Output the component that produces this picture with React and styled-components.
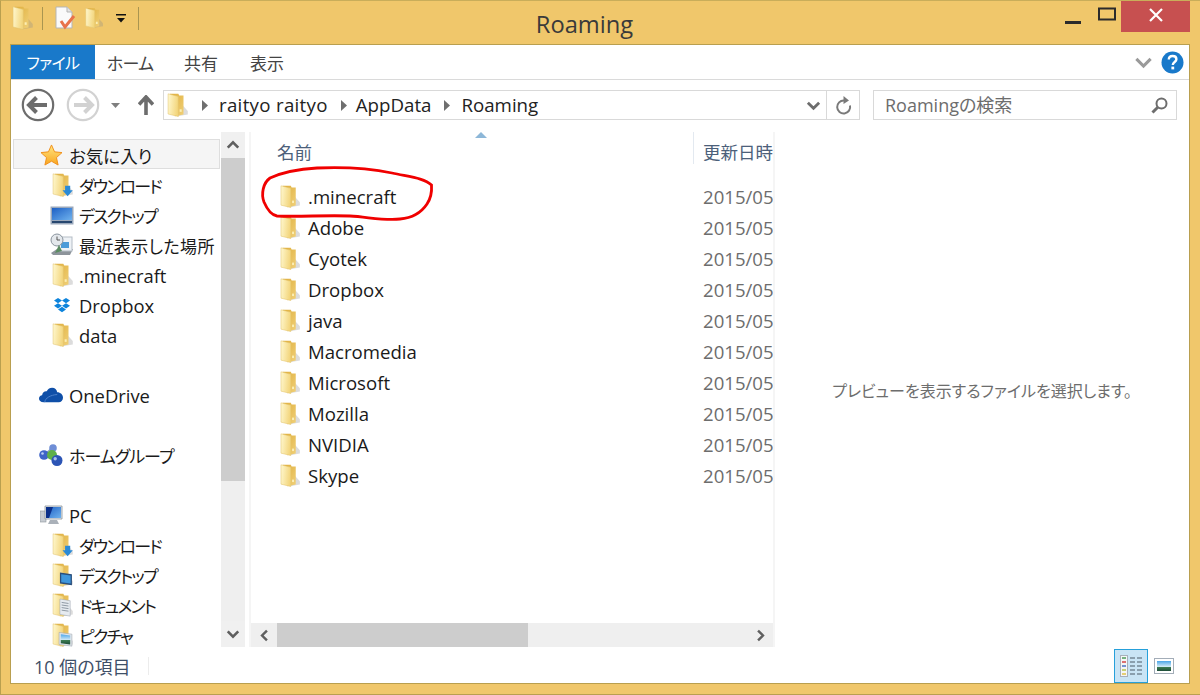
import React from 'react';
import styled, { createGlobalStyle } from 'styled-components';

const GlobalStyle = createGlobalStyle`
  html, body {
    margin: 0;
    padding: 0;
    overflow: hidden;
    background: #f0c76b;
  }
  * {
    box-sizing: border-box;
  }
`;

const FONT = `"Open Sans", "Noto Sans CJK JP", sans-serif`;

const Window = styled.div`
  width: 1200px;
  height: 695px;
  display: flex;
  flex-direction: column;
  background: #f0c76b;
  border: 1px solid #b99f4f;
  border-top-color: #c9ad5a;
  border-right: none;
  font-family: ${FONT};
  font-feature-settings: "palt";
  color: #1a1a1a;
`;

const TitleBar = styled.div`
  height: 43px;
  flex: none;
  display: grid;
  grid-template-columns: 1fr auto 1fr;
`;

const QuickAccess = styled.div`
  display: flex;
  align-items: center;
  height: 34px;
  padding-left: 11px;
`;

const Gap = styled.span`
  width: ${p => p.$w}px;
  flex: none;
`;

const QuickSep = styled.div`
  width: 1px;
  height: 23px;
  background: #a99550;
  margin: 0 ${p => p.$right || 12}px 0 ${p => p.$left || 8}px;
`;

const Title = styled.div`
  font-size: 23.7px;
  line-height: 46px;
  color: #3a3a3a;
  padding-right: 32px;
`;

const WindowButtons = styled.div`
  display: flex;
  justify-content: flex-end;
  padding-right: 10px;
`;

const WinButton = styled.div`
  width: ${p => p.$w}px;
  height: 31px;
  display: flex;
  align-items: center;
  justify-content: center;
  background: ${p => (p.$close ? '#c75050' : 'transparent')};

  svg {
    margin-top: ${p => p.$shift || 0}px;
  }
`;

const Panel = styled.div`
  flex: 1;
  margin: 0 10px 10px 9px;
  display: flex;
  flex-direction: column;
  background: #fff;
  border: 1px solid #b99f4f;
  min-height: 0;
`;

const Ribbon = styled.div`
  height: 35px;
  flex: none;
  display: flex;
  align-items: center;
  border-bottom: 1px solid #dadada;
`;

const FileTab = styled.div`
  width: 84px;
  height: 34px;
  background: #1979ca;
  color: #fff;
  font-size: 16px;
  letter-spacing: -0.6px;
  display: flex;
  align-items: center;
  justify-content: center;
`;

const Tab = styled.div`
  width: ${p => p.$w}px;
  text-align: center;
  font-size: 17px;
  color: #444;
  letter-spacing: ${p => p.$track || 0}px;
`;

const RibbonRight = styled.div`
  margin-left: auto;
  display: flex;
  align-items: center;
  gap: 8px;
  padding-right: 5px;
`;

const Toolbar = styled.div`
  height: 50px;
  flex: none;
  display: flex;
  align-items: flex-start;
  padding: 10px 12px 0 10px;
`;

const NavButtons = styled.div`
  width: 142px;
  height: 30px;
  flex: none;
  display: flex;
  align-items: center;
`;

const AddressBar = styled.div`
  width: 697px;
  height: 30px;
  flex: none;
  border: 1px solid #d9d9d9;
  display: flex;
  align-items: center;
  padding-left: 3px;
  font-size: 18.7px;
  color: #222;
`;

const Crumb = styled.span`
  margin: -2px 13px 0 ${p => p.$left || 9}px;
  letter-spacing: ${p => p.$track || 0}px;
  white-space: nowrap;
`;

const AddressTools = styled.div`
  margin-left: auto;
  height: 100%;
  display: flex;
  align-items: center;
`;

const ToolDivider = styled.div`
  width: 1px;
  height: 100%;
  background: #d9d9d9;
  margin: 0 8px 0 5px;
`;

const SearchBox = styled.div`
  flex: 1;
  height: 30px;
  margin-left: 13px;
  border: 1px solid #d9d9d9;
  display: flex;
  align-items: center;
  justify-content: space-between;
  padding: 0 8px 0 11px;
  font-size: 18px;
  color: #6d6d6d;

  span {
    margin-top: -2px;
  }
`;

const Content = styled.div`
  flex: 1;
  min-height: 0;
  display: flex;
`;

const NavPane = styled.div`
  width: 210px;
  flex: none;
  padding: 9px 0 0 2px;
  overflow: hidden;
`;

const NavRow = styled.div`
  height: 30px;
  width: 207px;
  margin-top: ${p => p.$gap || 0}px;
  padding: 2px 0 0 ${p => (p.$child ? 36 : 25)}px;
  display: flex;
  align-items: center;
  gap: ${p => (p.$child ? 5 : 6)}px;
  font-size: ${p => p.$size || 18.4}px;
  letter-spacing: ${p => p.$track || 0}px;
  white-space: nowrap;
  background: ${p => (p.$active ? '#f5f5f5' : 'transparent')};
  border: 1px solid ${p => (p.$active ? '#dedede' : 'transparent')};
`;

const IconSlot = styled.span`
  width: 24px;
  height: 24px;
  flex: none;
  display: flex;
  align-items: center;
  justify-content: center;
`;

const VScroll = styled.div`
  width: 24px;
  flex: none;
  margin-top: 2px;
  display: flex;
  flex-direction: column;
  background: #efefef;
`;

const ScrollBtn = styled.div`
  height: 26px;
  flex: none;
  display: flex;
  align-items: center;
  justify-content: center;
  background: #f0f0f0;
`;

const VThumb = styled.div`
  height: 323px;
  flex: none;
  background: #cdcdcd;
`;

const Spacer = styled.div`
  flex: 1;
`;

const FilePane = styled.div`
  width: 526px;
  flex: none;
  margin: 2px 0 0 4px;
  position: relative;
  display: flex;
  flex-direction: column;
  border-left: 2px solid #f5f5f5;
  border-right: 2px solid #f5f5f5;
  overflow: hidden;
`;

const SortMark = styled.div`
  position: absolute;
  left: 224px;
  top: 0;
  line-height: 0;
`;

const Circle = styled.svg`
  position: absolute;
  left: 0;
  top: 0;
  pointer-events: none;
`;

const Header = styled.div`
  height: 33px;
  flex: none;
  display: flex;
  font-size: 17.5px;
  color: #4c607a;
  white-space: nowrap;
`;

const NameHead = styled.div`
  width: 442px;
  flex: none;
  padding: 5px 0 0 26px;
  line-height: 30px;
`;

const DateHead = styled.div`
  flex: 1;
  border-left: 1px solid #e3e9f0;
  padding: 5px 0 0 9px;
  line-height: 30px;
  margin-bottom: 1px;
`;

const Rows = styled.div`
  flex: 1;
  min-height: 0;
  padding-top: 16px;
`;

const FileRow = styled.div`
  height: 31px;
  display: flex;
  align-items: center;
  font-size: 18.6px;
  white-space: nowrap;
`;

const FileName = styled.div`
  width: 442px;
  flex: none;
  padding-left: 29px;
  display: flex;
  align-items: center;
  gap: 8px;
  color: #1a1a1a;
`;

const FileDate = styled.div`
  flex: 1;
  padding-left: 10px;
  overflow: hidden;
  color: #6d6d6d;
`;

const HScroll = styled.div`
  height: 24px;
  flex: none;
  display: flex;
  background: #efefef;
`;

const HBtn = styled.div`
  width: 26px;
  flex: none;
  display: flex;
  align-items: center;
  justify-content: center;
`;

const HThumb = styled.div`
  width: 251px;
  flex: none;
  background: #cdcdcd;
`;

const Preview = styled.div`
  flex: 1;
  display: flex;
  align-items: center;
  justify-content: center;
  font-size: 16px;
  color: #6d6d6d;
  padding-top: 2px;
`;

const StatusBar = styled.div`
  height: 36px;
  flex: none;
  display: flex;
  align-items: center;
  padding: 1px 0 0 23px;
  font-size: 18px;
  color: #3f5068;
`;

const StatusSep = styled.div`
  width: 1px;
  height: 18px;
  background: #ececec;
  margin-left: 17px;
`;

const ViewButtons = styled.div`
  margin-left: auto;
  display: flex;
  align-items: center;
  gap: 6px;
  padding-right: 15px;
`;

const ViewBtn = styled.div`
  width: 34px;
  height: 34px;
  display: flex;
  align-items: center;
  justify-content: center;
  background: #c9e4f5;
  border: 1px solid #26a0da;
`;

const Defs = () => (
  <svg width="0" height="0" style={{ position: 'absolute' }}>
    <defs>
      <linearGradient id="fFront" x1="0" y1="0" x2="1" y2="0.2">
        <stop offset="0" stopColor="#fff8cf" />
        <stop offset="1" stopColor="#f3d67e" />
      </linearGradient>
      <linearGradient id="fBack" x1="0" y1="0" x2="1" y2="1">
        <stop offset="0" stopColor="#dfae3c" />
        <stop offset="1" stopColor="#f0d078" />
      </linearGradient>
      <linearGradient id="star" x1="0" y1="0" x2="0" y2="1">
        <stop offset="0" stopColor="#ffe680" />
        <stop offset="1" stopColor="#f9a51f" />
      </linearGradient>
      <linearGradient id="screen" x1="0" y1="0" x2="1" y2="1">
        <stop offset="0" stopColor="#1d5fc4" />
        <stop offset="1" stopColor="#6fb2ee" />
      </linearGradient>
      <linearGradient id="sky" x1="0" y1="0" x2="0" y2="1">
        <stop offset="0" stopColor="#4aa5e8" />
        <stop offset="0.55" stopColor="#cfe8f5" />
        <stop offset="0.6" stopColor="#3d7d52" />
        <stop offset="1" stopColor="#1f4d38" />
      </linearGradient>
    </defs>
  </svg>
);

const Folder = ({ w = 21, h = 24, children }) => (
  <svg width={w} height={h} viewBox="0 0 24 28">
    <path d="M14 10 L24 21 L24 25 L12 27 Z" fill="#8a8a8a" opacity="0.3" />
    <path d="M3 1 H13 L14 3 H19 V25 L9 27 Z" fill="url(#fBack)" />
    <path d="M1 1 L13 4 V27.5 L1 24.5 Z" fill="url(#fFront)" stroke="#e2c26b" strokeWidth="0.6" />
    <rect x="14.5" y="19" width="2.4" height="3" fill="#fbeeb4" />
    {children}
  </svg>
);

const Star = () => (
  <svg width="23" height="22" viewBox="0 0 24 23">
    <path
      d="M12 1 L15.2 8.2 L23 9 L17.2 14.2 L18.9 22 L12 18 L5.1 22 L6.8 14.2 L1 9 L8.8 8.2 Z"
      fill="url(#star)"
      stroke="#ef8f1a"
      strokeWidth="1"
    />
  </svg>
);

const DownloadBadge = () => (
  <path d="M15 15 H21 V20 H24 L18 27 L12 20 H15 Z" fill="#2b8ad6" />
);

const DesktopIcon = () => (
  <svg width="24" height="19" viewBox="0 0 24 19">
    <rect x="0.5" y="0.5" width="23" height="18" fill="#9aa8bb" />
    <rect x="2" y="2" width="20" height="12" fill="url(#screen)" />
    <rect x="2" y="15" width="20" height="2" fill="#27476f" />
  </svg>
);

const RecentIcon = () => (
  <svg width="24" height="24" viewBox="0 0 24 24">
    <path d="M1 20 L7 16 H23 L20 22 H3 Z" fill="#8d949b" />
    <rect x="9" y="4" width="13" height="14" fill="#eef2f6" stroke="#b5bdc6" />
    <rect x="11" y="9" width="8" height="6" fill="#4b9bd8" />
    <circle cx="7" cy="7" r="6" fill="#e4e8ec" stroke="#8a949e" />
    <path d="M7 3.5 V7 H10" fill="none" stroke="#555" strokeWidth="1" />
    <path d="M5 20 L9 12 L12 18 Z" fill="#5b8c62" />
  </svg>
);

const DropboxIcon = () => (
  <svg width="16" height="15" viewBox="0 0 16 15">
    <path
      d="M4 0 L8 2.6 L4 5.2 L0 2.6 Z M12 0 L16 2.6 L12 5.2 L8 2.6 Z M4 5.2 L8 7.8 L4 10.4 L0 7.8 Z M12 5.2 L16 7.8 L12 10.4 L8 7.8 Z M4 11.4 L8 8.8 L12 11.4 L8 14.2 Z"
      fill="#0d84dc"
    />
  </svg>
);

const CloudIcon = () => (
  <svg width="25" height="16" viewBox="0 0 25 16">
    <path
      d="M5 15.5 C1.5 15.5 0 13.6 0 11.6 C0 9.6 1.5 8.4 3.2 8.2 C3.6 5.2 6 3.8 8 4.2 C9.3 1.6 11.4 0.5 13.6 0.5 C16.6 0.5 18.6 2.6 19 5.2 C22.4 5.2 25 7.8 25 10.8 C25 13.6 23 15.5 20.5 15.5 Z"
      fill="#0f4fa8"
    />
    <path d="M6 15.5 C6.5 11 12 8 19 7.5" fill="none" stroke="#4d82cc" strokeWidth="1" />
  </svg>
);

const HomeGroupIcon = () => (
  <svg width="24" height="23" viewBox="0 0 24 23">
    <path d="M5 11 L13 4 L18 16 Z" fill="none" stroke="#93a7c2" strokeWidth="1.5" />
    <circle cx="5" cy="11" r="4.8" fill="#3f64c8" />
    <circle cx="14" cy="4" r="3.8" fill="#6f8ed6" />
    <circle cx="13" cy="11" r="5" fill="#5fb04a" />
    <circle cx="18" cy="16.5" r="5.5" fill="#2c55b5" />
    <circle cx="16.2" cy="14.8" r="1.7" fill="#a7c0ee" />
    <circle cx="3.5" cy="9.5" r="1.3" fill="#bcd0f2" />
  </svg>
);

const PcIcon = () => (
  <svg width="23" height="20" viewBox="0 0 23 20">
    <rect x="0" y="6" width="6" height="11" fill="#c7ccd2" stroke="#8d949b" strokeWidth="0.6" />
    <path d="M5 1 H22 V14 H5 Z" fill="#dfe5ec" stroke="#8d949b" strokeWidth="0.8" />
    <path d="M6 2 H21 V13 H6 Z" fill="url(#screen)" />
    <path d="M6 2 H13 L9 13 H6 Z" fill="#0a2f8a" />
    <path d="M10 15 H17 L19 19 H8 Z" fill="#aab1b9" />
  </svg>
);

const DesktopBadge = () => (
  <g>
    <path d="M9 11 L23 13 V26 L9 24 Z" fill="#2a4f7d" />
    <path d="M10.5 13 L21.5 14.5 V23.8 L10.5 22.4 Z" fill="#3f97dc" />
  </g>
);

const DocBadge = () => (
  <g>
    <path d="M9 7 L21 9 V27 L9 25 Z" fill="#e6ebf0" stroke="#9aa3ad" strokeWidth="0.6" />
    <path d="M11 11 L19 12.2 M11 14 L19 15.2 M11 17 L19 18.2 M11 20 L19 21.2" stroke="#7f8b97" strokeWidth="1" />
  </g>
);

const PictureBadge = () => (
  <g>
    <path d="M8 11 L23 13 V27 L8 25 Z" fill="#dfe5ea" stroke="#9aa3ad" strokeWidth="0.6" />
    <path d="M10 13 L21 14.5 V25 L10 23.5 Z" fill="url(#sky)" />
  </g>
);

const DocCheck = () => (
  <svg width="21" height="24" viewBox="0 0 21 24">
    <path d="M1 1 H12 L17 6 V22 H1 Z" fill="#fafafa" stroke="#b5b5b5" />
    <path d="M12 1 V6 H17" fill="#e4e4e4" stroke="#b5b5b5" />
    <path d="M6 15 L10 21 L19 10" fill="none" stroke="#e8734a" strokeWidth="3" />
  </svg>
);

const QatArrow = () => (
  <svg width="10" height="9" viewBox="0 0 10 9">
    <rect x="0" y="0" width="10" height="1.5" fill="#111" />
    <path d="M1 4 H9 L5 8.5 Z" fill="#111" />
  </svg>
);

const RoundNav = ({ color, d }) => (
  <svg width="34" height="34" viewBox="0 0 34 34">
    <circle cx="17" cy="17" r="15.2" fill="#fff" stroke={color} strokeWidth="2.2" />
    <path d={d} fill="none" stroke={color} strokeWidth="4" />
  </svg>
);

const Caret = () => (
  <svg width="9" height="5" viewBox="0 0 9 5">
    <path d="M0 0 H9 L4.5 5 Z" fill="#7f7f7f" />
  </svg>
);

const UpArrow = () => (
  <svg width="16" height="20" viewBox="0 0 16 20">
    <path d="M8 20 V3 M1 9.5 L8 2 L15 9.5" fill="none" stroke="#6d6d6d" strokeWidth="3.6" />
  </svg>
);

const CrumbArrow = () => (
  <svg width="6" height="11" viewBox="0 0 6 11">
    <path d="M0 0 L6 5.5 L0 11 Z" fill="#6f6f6f" />
  </svg>
);

const Chevron = ({ dir = 'down', size = 14, stroke = '#5f5f5f', width = 3 }) => {
  const paths = {
    down: 'M2 5 L8 11 L14 5',
    up: 'M2 11 L8 5 L14 11',
    left: 'M11 2 L5 8 L11 14',
    right: 'M5 2 L11 8 L5 14',
  };
  return (
    <svg width={size} height={size} viewBox="0 0 16 16">
      <path d={paths[dir]} fill="none" stroke={stroke} strokeWidth={width} />
    </svg>
  );
};

const Refresh = () => (
  <svg width="17" height="19" viewBox="0 0 17 19">
    <path d="M9 4.5 A6.5 6.5 0 1 0 15 9.5" fill="none" stroke="#7a7a7a" strokeWidth="2" />
    <path d="M8.5 0 L14 4.5 L8.5 8 Z" fill="#7a7a7a" />
  </svg>
);

const SearchGlass = () => (
  <svg width="17" height="17" viewBox="0 0 17 17">
    <circle cx="10.5" cy="6.5" r="5" fill="none" stroke="#6d6d6d" strokeWidth="2" />
    <path d="M6.8 10.2 L1.5 15.5" stroke="#6d6d6d" strokeWidth="3" />
  </svg>
);

const Help = () => (
  <svg width="23" height="23" viewBox="0 0 23 23">
    <circle cx="11.5" cy="11.5" r="11" fill="#1979ca" />
    <path d="M7.8 8.6 C7.8 6 9.5 5 11.6 5 C13.8 5 15.4 6.2 15.4 8.2 C15.4 11 11.8 11 11.8 14" fill="none" stroke="#fff" strokeWidth="2.4" />
    <rect x="10.4" y="15.6" width="2.8" height="2.8" fill="#fff" />
  </svg>
);

const ListViewIcon = () => (
  <svg width="22" height="22" viewBox="0 0 22 22">
    <rect x="0.5" y="0.5" width="7" height="21" fill="#f4f6f8" stroke="#a8b0ba" />
    <path d="M2 3 H6" stroke="#4d9a5a" strokeWidth="1.5" />
    <path d="M2 7 H6" stroke="#d64545" strokeWidth="1.5" />
    <path d="M2 11 H6" stroke="#4a72c4" strokeWidth="1.5" />
    <path d="M2 15 H6" stroke="#b5c34a" strokeWidth="1.5" />
    <path d="M2 19 H6" stroke="#e0c14a" strokeWidth="1.5" />
    <path
      d="M10 3 H15 M17 3 H22 M10 7 H15 M17 7 H22 M10 11 H15 M17 11 H22 M10 15 H15 M17 15 H22 M10 19 H15 M17 19 H22"
      stroke="#4c5a68"
      strokeWidth="1.2"
    />
  </svg>
);

const PreviewViewIcon = () => (
  <svg width="20" height="16" viewBox="0 0 20 16">
    <rect x="0.5" y="0.5" width="19" height="15" fill="#fff" stroke="#a3adb8" />
    <rect x="3" y="3" width="14" height="10" fill="url(#sky)" />
  </svg>
);

const KANA = { size: 17, track: -1.8 };

const navTop = [
  { label: 'ダウンロード', ...KANA, icon: <Folder><DownloadBadge /></Folder> },
  { label: 'デスクトップ', ...KANA, icon: <DesktopIcon /> },
  { label: '最近表示した場所', size: 17, track: 0.4, icon: <RecentIcon /> },
  { label: '.minecraft', icon: <Folder /> },
  { label: 'Dropbox', icon: <DropboxIcon /> },
  { label: 'data', icon: <Folder /> },
];

const navPc = [
  { label: 'ダウンロード', ...KANA, icon: <Folder><DownloadBadge /></Folder> },
  { label: 'デスクトップ', ...KANA, icon: <Folder><DesktopBadge /></Folder> },
  { label: 'ドキュメント', ...KANA, icon: <Folder><DocBadge /></Folder> },
  { label: 'ピクチャ', ...KANA, icon: <Folder><PictureBadge /></Folder> },
];

const files = ['.minecraft', 'Adobe', 'Cyotek', 'Dropbox', 'java', 'Macromedia', 'Microsoft', 'Mozilla', 'NVIDIA', 'Skype'];

const ChildRow = ({ item }) => (
  <NavRow $child $size={item.size} $track={item.track}>
    <IconSlot>{item.icon}</IconSlot>
    {item.label}
  </NavRow>
);

const App = () => (
  <Window>
    <GlobalStyle />
    <Defs />
    <TitleBar>
      <QuickAccess>
        <Folder w={21} h={24} />
        <QuickSep $left={9} $right={12} />
        <DocCheck />
        <Gap $w={9} />
        <Folder w={18} h={24} />
        <Gap $w={13} />
        <QatArrow />
        <QuickSep $left={12} />
      </QuickAccess>
      <Title>Roaming</Title>
      <WindowButtons>
        <WinButton $w={39} $shift={12}>
          <svg width="16" height="3"><rect width="16" height="3" fill="#2b2b2b" /></svg>
        </WinButton>
        <WinButton $w={29} $shift={-6}>
          <svg width="18" height="14"><rect x="1" y="1.5" width="16" height="11" fill="none" stroke="#2b2b2b" strokeWidth="2" /></svg>
        </WinButton>
        <WinButton $w={69} $close $shift={-4}>
          <svg width="14" height="14"><path d="M1 1 L13 13 M13 1 L1 13" stroke="#fff" strokeWidth="2.2" /></svg>
        </WinButton>
      </WindowButtons>
    </TitleBar>
    <Panel>
      <Ribbon>
        <FileTab>ファイル</FileTab>
        <Tab $w={70} $track={-0.8}>ホーム</Tab>
        <Tab $w={72}>共有</Tab>
        <Tab $w={60}>表示</Tab>
        <RibbonRight>
          <Chevron size={19} stroke="#9a9a9a" width={2.6} />
          <Help />
        </RibbonRight>
      </Ribbon>
      <Toolbar>
        <NavButtons>
          <RoundNav color="#6d6d6d" d="M8 17 H26 M15.5 9.5 L8 17 L15.5 24.5" />
          <Gap $w={11} />
          <RoundNav color="#d2d2d2" d="M8 17 H26 M18.5 9.5 L26 17 L18.5 24.5" />
          <Gap $w={11} />
          <Caret />
          <Gap $w={18} />
          <UpArrow />
        </NavButtons>
        <AddressBar>
          <Folder w={21} h={24} />
          <Gap $w={14} />
          <CrumbArrow />
          <Crumb $left={11} $track={0.3}>raityo raityo</Crumb>
          <CrumbArrow />
          <Crumb>AppData</Crumb>
          <CrumbArrow />
          <Crumb $left={11}>Roaming</Crumb>
          <AddressTools>
            <Chevron size={15} stroke="#6d6d6d" width={3} />
            <ToolDivider />
            <Refresh />
            <Gap $w={7} />
          </AddressTools>
        </AddressBar>
        <SearchBox>
          <span>Roamingの検索</span>
          <SearchGlass />
        </SearchBox>
      </Toolbar>
      <Content>
        <NavPane>
          <NavRow $active $size={17.5}>
            <IconSlot><Star /></IconSlot>
            お気に入り
          </NavRow>
          {navTop.map(item => <ChildRow item={item} key={item.label} />)}
          <NavRow $gap={30}>
            <IconSlot><CloudIcon /></IconSlot>
            OneDrive
          </NavRow>
          <NavRow $gap={30} $size={17} $track={-0.95}>
            <IconSlot><HomeGroupIcon /></IconSlot>
            ホームグループ
          </NavRow>
          <NavRow $gap={30}>
            <IconSlot><PcIcon /></IconSlot>
            PC
          </NavRow>
          {navPc.map(item => <ChildRow item={item} key={item.label} />)}
        </NavPane>
        <VScroll>
          <ScrollBtn><Chevron dir="up" /></ScrollBtn>
          <VThumb />
          <Spacer />
          <ScrollBtn><Chevron /></ScrollBtn>
        </VScroll>
        <FilePane>
          <SortMark>
            <svg width="12" height="6" viewBox="0 0 12 6"><path d="M0 6 L6 0 L12 6 Z" fill="#8db7d8" /></svg>
          </SortMark>
          <Header>
            <NameHead>名前</NameHead>
            <DateHead>更新日時</DateHead>
          </Header>
          <Rows>
            {files.map(name => (
              <FileRow key={name}>
                <FileName>
                  <Folder w={20} h={23} />
                  {name}
                </FileName>
                <FileDate>2015/05</FileDate>
              </FileRow>
            ))}
          </Rows>
          <HScroll>
            <HBtn><Chevron dir="left" size={13} /></HBtn>
            <HThumb />
            <Spacer />
            <HBtn><Chevron dir="right" size={13} /></HBtn>
          </HScroll>
          <Circle width="522" height="110" viewBox="251 132 522 110">
            <path
              d="M431.5 185 C424 178 410 177 392 173 C368 168 340 167 317 168 C300 169 283 172 270 178 C263 183 261 194 264 202 C267 209 271 215 277 216 C300 217 325 215 350 216 C368 217 385 221 400 219 C412 218 421 213 427 204 C431 198 432 192 431.5 185 Z"
              fill="none"
              stroke="#f00000"
              strokeWidth="2.8"
            />
          </Circle>
        </FilePane>
        <Preview>プレビューを表示するファイルを選択します。</Preview>
      </Content>
      <StatusBar>
        10 個の項目
        <StatusSep />
        <ViewButtons>
          <ViewBtn><ListViewIcon /></ViewBtn>
          <PreviewViewIcon />
        </ViewButtons>
      </StatusBar>
    </Panel>
  </Window>
);

export default App;
